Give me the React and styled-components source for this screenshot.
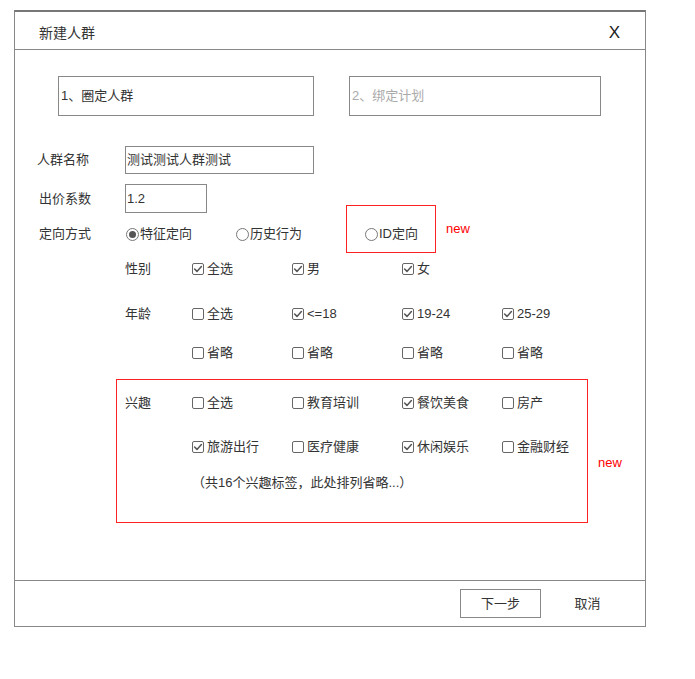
import React from "react";
import styled, { createGlobalStyle } from "styled-components";

const Global = createGlobalStyle`
  html, body { margin: 0; padding: 0; background: #fff; }
  body {
    font-family: "Liberation Sans", "Noto Sans CJK SC", sans-serif;
    font-size: 13px;
    color: #333;
  }
  * { box-sizing: border-box; }
`;

const Dialog = styled.div`
  margin: 10px 0 0 14px;
  width: 632px;
  height: 617px;
  border: 1px solid #888;
  border-top: 2px solid #777;
  display: flex;
  flex-direction: column;
  background: #fff;
`;

const Header = styled.div`
  height: 38px;
  border-bottom: 1px solid #888;
  display: flex;
  align-items: center;
  justify-content: space-between;
  padding: 4px 25px 0 24px;
`;

const Title = styled.div`
  font-size: 14px;
  color: #333;
  line-height: 20px;
`;

const Close = styled.div`
  font-family: "Liberation Sans", sans-serif;
  font-size: 17px;
  color: #222;
  line-height: 20px;
`;

const Body = styled.div`
  flex: 1;
  display: flex;
  flex-direction: column;
`;

const Steps = styled.div`
  display: flex;
  gap: 35px;
  padding: 26px 0 0 43px;
`;

const Step = styled.div`
  width: ${(p) => p.$w}px;
  height: 40px;
  border: 1px solid #888;
  display: flex;
  align-items: center;
  padding-left: 2px;
  color: ${(p) => (p.$active ? "#333" : "#aaa")};
  line-height: 18px;
`;

const Form = styled.div`
  padding-left: 22px;
  display: flex;
  flex-direction: column;
`;

const FieldRow = styled.div`
  display: flex;
  align-items: center;
  margin-top: ${(p) => p.$mt}px;
  height: ${(p) => p.$h}px;
`;

const Label = styled.div`
  width: 88px;
  padding-left: ${(p) => p.$indent || 0}px;
  line-height: 18px;
  color: #333;
`;

const TextBox = styled.div`
  width: ${(p) => p.$w}px;
  height: 100%;
  border: 1px solid #888;
  display: flex;
  align-items: center;
  padding-left: 1px;
  color: #333;
  line-height: 18px;
`;

const RadioGroup = styled.div`
  display: flex;
  align-items: center;
  height: 100%;
  margin-left: 1px;
`;

const RadioItem = styled.div`
  position: relative;
  width: ${(p) => (p.$w ? `${p.$w}px` : "auto")};
  display: flex;
  align-items: center;
  gap: 1px;
  line-height: 18px;
`;

const RadioDot = styled.span`
  width: 13px;
  height: 13px;
  border-radius: 50%;
  border: 1px solid #777;
  background: #fff;
  display: inline-flex;
  align-items: center;
  justify-content: center;
  &::after {
    content: "";
    width: 7px;
    height: 7px;
    border-radius: 50%;
    background: ${(p) => (p.$on ? "#555" : "transparent")};
  }
`;

const RedFrame = styled.div`
  position: absolute;
  left: -19px;
  top: -20px;
  width: 90px;
  height: 48px;
  border: 1px solid #f22;
  pointer-events: none;
`;

const NewTag = styled.span`
  position: absolute;
  left: ${(p) => p.$x}px;
  top: ${(p) => p.$y}px;
  font-family: "Liberation Sans", sans-serif;
  font-size: 13px;
  color: #f00;
  line-height: 16px;
`;

const OptionBlock = styled.div`
  margin-left: 88px;
  display: flex;
  flex-direction: column;
`;

const OptionRow = styled.div`
  display: grid;
  grid-template-columns: 67px 100px 110px 100px auto;
  align-items: center;
  height: 24px;
  margin-top: ${(p) => p.$mt}px;
`;

const OptLabel = styled.div`
  line-height: 18px;
  color: #333;
`;

const CheckItem = styled.div`
  display: flex;
  align-items: center;
  gap: 3px;
  line-height: 18px;
  color: #333;
`;

const Box = styled.span`
  width: 12px;
  height: 12px;
  border: 1px solid #666;
  border-radius: 2px;
  display: inline-flex;
  align-items: center;
  justify-content: center;
  background: #fff;
`;

const InterestFrame = styled.div`
  position: relative;
  margin: 14px 0 0 79px;
  width: 472px;
  border: 1px solid #f22;
  padding: 11px 0 27px 8px;
`;

const Note = styled.div`
  margin: 12px 0 0 67px;
  height: 24px;
  display: flex;
  align-items: center;
  line-height: 18px;
  color: #333;
`;

const Footer = styled.div`
  height: 46px;
  border-top: 1px solid #888;
  display: flex;
  justify-content: flex-end;
  align-items: flex-start;
  gap: 6px;
  padding: 8px 17px 0 0;
`;

const Button = styled.div`
  width: 81px;
  height: 29px;
  border: 1px solid ${(p) => (p.$plain ? "transparent" : "#888")};
  display: flex;
  align-items: center;
  justify-content: center;
  line-height: 18px;
  color: #333;
`;

function Check({ on, children }) {
  return (
    <CheckItem>
      <Box>
        {on && (
          <svg width="10" height="10" viewBox="0 0 10 10">
            <polyline
              points="1.6,5 4,7.4 8.4,2.6"
              fill="none"
              stroke="#555"
              strokeWidth="1.5"
              strokeLinecap="round"
              strokeLinejoin="round"
            />
          </svg>
        )}
      </Box>
      <span>{children}</span>
    </CheckItem>
  );
}

function Options({ label, items, mt }) {
  return (
    <OptionRow $mt={mt}>
      <OptLabel>{label}</OptLabel>
      {items.map(([t, on], i) => (
        <Check key={i} on={on}>
          {t}
        </Check>
      ))}
    </OptionRow>
  );
}

export default function App() {
  return (
    <>
      <Global />
      <Dialog>
        <Header>
          <Title>新建人群</Title>
          <Close>X</Close>
        </Header>
        <Body>
          <Steps>
            <Step $w={256} $active>1、圈定人群</Step>
            <Step $w={252}>2、绑定计划</Step>
          </Steps>
          <Form>
            <FieldRow $mt={30} $h={28}>
              <Label>人群名称</Label>
              <TextBox $w={189}>测试测试人群测试</TextBox>
            </FieldRow>
            <FieldRow $mt={10} $h={29}>
              <Label $indent={2}>出价系数</Label>
              <TextBox $w={82}>1.2</TextBox>
            </FieldRow>
            <FieldRow $mt={9} $h={24}>
              <Label $indent={2}>定向方式</Label>
              <RadioGroup>
                <RadioItem $w={110}>
                  <RadioDot $on />
                  <span>特征定向</span>
                </RadioItem>
                <RadioItem $w={129}>
                  <RadioDot />
                  <span>历史行为</span>
                </RadioItem>
                <RadioItem>
                  <RedFrame />
                  <RadioDot />
                  <span>ID定向</span>
                  <NewTag $x={81} $y={-4}>new</NewTag>
                </RadioItem>
              </RadioGroup>
            </FieldRow>
            <OptionBlock>
              <Options
                mt={11}
                label="性别"
                items={[
                  ["全选", true],
                  ["男", true],
                  ["女", true],
                ]}
              />
              <Options
                mt={21}
                label="年龄"
                items={[
                  ["全选", false],
                  ["<=18", true],
                  ["19-24", true],
                  ["25-29", true],
                ]}
              />
              <Options
                mt={15}
                label=""
                items={[
                  ["省略", false],
                  ["省略", false],
                  ["省略", false],
                  ["省略", false],
                ]}
              />
            </OptionBlock>
            <InterestFrame>
              <Options
                mt={0}
                label="兴趣"
                items={[
                  ["全选", false],
                  ["教育培训", false],
                  ["餐饮美食", true],
                  ["房产", false],
                ]}
              />
              <Options
                mt={20}
                label=""
                items={[
                  ["旅游出行", true],
                  ["医疗健康", false],
                  ["休闲娱乐", true],
                  ["金融财经", false],
                ]}
              />
              <Note>（共16个兴趣标签，此处排列省略...）</Note>
              <NewTag $x={481} $y={75}>new</NewTag>
            </InterestFrame>
          </Form>
        </Body>
        <Footer>
          <Button>下一步</Button>
          <Button $plain>取消</Button>
        </Footer>
      </Dialog>
    </>
  );
}
